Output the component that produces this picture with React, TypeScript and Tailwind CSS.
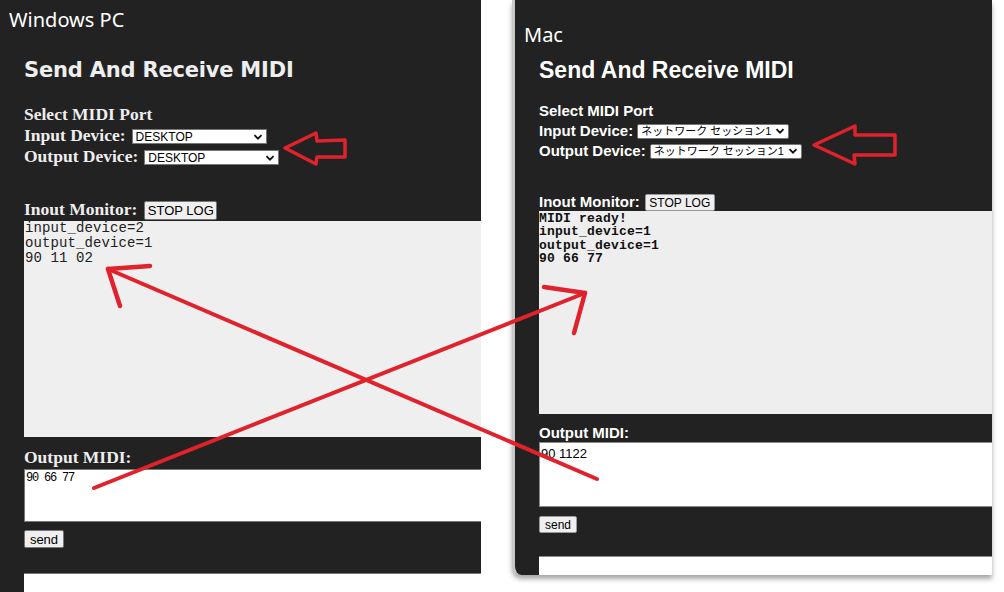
import React from "react";

function Chevron({ size = 10 }: { size?: number }) {
    return (
        <svg width={size} height={size} viewBox="0 0 10 10" className="shrink-0">
            <path d="M1.5 3.2 L5 6.7 L8.5 3.2" fill="none" stroke="#111" strokeWidth="1.8" />
        </svg>
    );
}

function FakeSelect({ value, className, textClass }: { value: string; className: string; textClass: string }) {
    return (
        <span className={`inline-flex items-center justify-between bg-white border border-[#767676] pl-[3px] pr-[3px] text-black ${className}`}>
            <span className={textClass}>{value}</span>
            <Chevron />
        </span>
    );
}

function WindowsPanel() {
    const label = "font-['Liberation_Serif',serif] font-bold text-[17.5px] leading-[21px] text-[#eeeeee]";
    return (
        <div className="w-[481px] h-[592px] shrink-0 bg-[#222222] overflow-hidden">
            <div className="pt-[6px] pl-[9px] h-[34px] font-['Noto_Sans',sans-serif] text-[20px] leading-[28px] text-white">
                Windows PC
            </div>
            <div className="pl-6">
                <h1 className="mt-[23px] font-['DejaVu_Sans',sans-serif] font-bold text-[21px] leading-[26px] tracking-[-0.2px] text-[#eeeeee]">
                    Send And Receive MIDI
                </h1>
                <div className={`mt-[21px] ${label}`}>Select MIDI Port</div>
                <div className={`flex items-center h-[21px] ${label}`}>
                    <span>Input Device:</span>
                    <FakeSelect value="DESKTOP" className="ml-[6px] w-[135px] h-[15px] mt-[2px]" textClass="font-['Liberation_Sans',sans-serif] font-normal text-[12px] leading-none" />
                </div>
                <div className={`flex items-center h-[21px] ${label}`}>
                    <span>Output Device:</span>
                    <FakeSelect value="DESKTOP" className="ml-[6px] w-[135px] h-[15px] mt-[2px]" textClass="font-['Liberation_Sans',sans-serif] font-normal text-[12px] leading-none" />
                </div>
                <div className={`mt-[32px] flex items-start h-[22px] ${label}`}>
                    <span>Inout Monitor:</span>
                    <button className="ml-[7px] mt-[2px] h-[19px] w-[73px] bg-[#efefef] border border-[#767676] rounded-[2px] font-['Liberation_Sans',sans-serif] font-normal text-[13px] leading-none text-black">
                        STOP LOG
                    </button>
                </div>
                <div className="h-[216px] bg-[#efefef] pl-[1px] font-['Liberation_Mono',monospace] text-[14px] leading-[15px] tracking-[0.1px] text-[#222222]">
                    <div>input_device=2</div>
                    <div>output_device=1</div>
                    <div>90 11 02</div>
                </div>
                <div className={`mt-[10px] ${label}`}>Output MIDI:</div>
                <div className="mt-px h-[53px] bg-white border border-[#767676] border-r-0 pl-[1px] pt-[1px] font-['Liberation_Mono',monospace] text-[12px] leading-[14px] tracking-[-1.2px] text-black">
                    90 66 77
                </div>
                <button className="mt-[8px] h-[18px] w-[40px] bg-[#efefef] border border-[#767676] rounded-[2px] font-['Liberation_Sans',sans-serif] text-[13px] leading-none text-black">
                    send
                </button>
                <div className="mt-[23px] h-[40px] bg-white border-t border-[#767676]"></div>
            </div>
        </div>
    );
}

function MacPanel() {
    const label = "font-['Liberation_Sans',sans-serif] font-bold text-[15px] leading-[20px] text-white";
    const jp = "font-['Liberation_Sans','Noto_Sans_CJK_JP',sans-serif] font-normal text-[11px] leading-none";
    return (
        <div className="w-[480px] h-[575px] shrink-0 bg-[#222222] border-l-[3px] border-[#c8c8c8] rounded-bl-[9px] overflow-hidden shadow-[0_4px_5px_rgba(0,0,0,0.35)]">
            <div className="pt-[21px] pl-[9px] h-[49px] font-['Noto_Sans',sans-serif] text-[20px] leading-[28px] text-white">
                Mac
            </div>
            <div className="pl-6">
                <h1 className="mt-[8px] font-['Liberation_Sans',sans-serif] font-bold text-[23px] leading-[26px] text-white">
                    Send And Receive MIDI
                </h1>
                <div className={`mt-[18px] ${label}`}>Select MIDI Port</div>
                <div className={`flex items-center h-[20px] ${label}`}>
                    <span>Input Device:</span>
                    <FakeSelect value="ネットワーク セッション1" className="ml-[4px] w-[152px] h-[15px] rounded-[2px]" textClass={jp} />
                </div>
                <div className={`flex items-center h-[20px] ${label}`}>
                    <span>Output Device:</span>
                    <FakeSelect value="ネットワーク セッション1" className="ml-[4px] w-[152px] h-[15px] rounded-[2px]" textClass={jp} />
                </div>
                <div className={`mt-[31px] flex items-start h-[19px] ${label}`}>
                    <span>Inout Monitor:</span>
                    <button className="ml-[5px] mt-[2px] h-[17px] w-[70px] bg-[#efefef] border border-[#9a9a9a] rounded-[2px] font-['Liberation_Sans',sans-serif] font-normal text-[12px] leading-none text-black">
                        STOP LOG
                    </button>
                </div>
                <div className="h-[203px] bg-[#eeeeee] pt-[1px] font-['Liberation_Mono',monospace] font-bold text-[13px] leading-[13.4px] tracking-[0.2px] text-[#111111]">
                    <div>MIDI ready!</div>
                    <div>input_device=1</div>
                    <div>output_device=1</div>
                    <div>90 66 77</div>
                </div>
                <div className={`mt-[9px] h-[19px] leading-[19px] ${label}`}>Output MIDI:</div>
                <div className="h-[65px] bg-white border border-[#8a8a8a] border-r-0 pl-[1px] pt-[4px] font-['Liberation_Sans',sans-serif] text-[13px] leading-[14px] text-black">
                    90 1122
                </div>
                <button className="mt-[9px] h-[17px] w-[38px] bg-[#efefef] border border-[#9a9a9a] rounded-[2px] font-['Liberation_Sans',sans-serif] text-[12px] leading-none text-black">
                    send
                </button>
                <div className="mt-[21px] h-[40px] bg-white border-t border-[#8a8a8a]"></div>
            </div>
        </div>
    );
}

function Annotations() {
    const red = "#e0222c";
    return (
        <svg width="1004" height="592" viewBox="0 0 1004 592" className="absolute left-0 top-0 pointer-events-none">
            <g fill="none" stroke={red} strokeLinecap="round" strokeLinejoin="round">
                <polygon points="285,148 316,133 317,141 345,140 345,157 317,157 316,164" strokeWidth="3.5" />
                <polygon points="814,145 855,126 855,135 895,135 895,155 854,155 855,164" strokeWidth="3.5" />
                <line x1="597" y1="479" x2="108" y2="269" strokeWidth="4" />
                <line x1="108" y1="269" x2="150" y2="266" strokeWidth="4.5" />
                <line x1="108" y1="269" x2="120" y2="306" strokeWidth="4.5" />
                <line x1="94" y1="488" x2="585" y2="293" strokeWidth="4" />
                <line x1="585" y1="293" x2="544" y2="287" strokeWidth="4.5" />
                <line x1="585" y1="293" x2="574" y2="333" strokeWidth="4.5" />
            </g>
        </svg>
    );
}

export default function App() {
    return (
        <div className="relative w-[1004px] h-[592px] bg-white overflow-hidden">
            <div className="flex gap-[31px]">
                <WindowsPanel />
                <MacPanel />
            </div>
            <Annotations />
        </div>
    );
}
